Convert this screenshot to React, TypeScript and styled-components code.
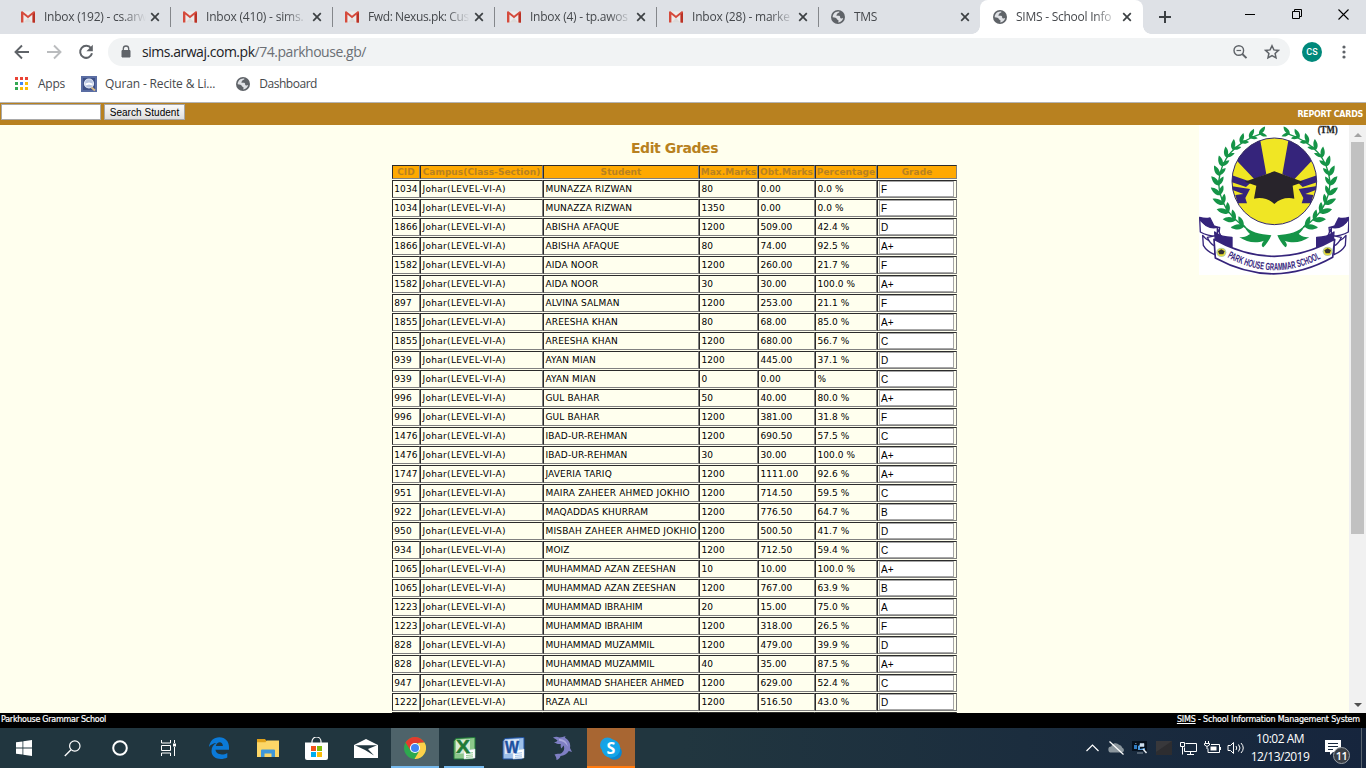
import React from "react";
import styled, { createGlobalStyle } from "styled-components";

const VERDANA = `Verdana, "DejaVu Sans", sans-serif`;
const SEGOE = `"Segoe UI", "Open Sans", "Noto Sans", sans-serif`;
const BLUE = "#35247b";

const Global = createGlobalStyle`
  *{box-sizing:border-box}
  html,body{margin:0;padding:0;overflow:hidden;background:#ffffee}
`;
const Screen = styled.div`
  width:1366px;height:768px;display:flex;flex-direction:column;overflow:hidden;
  font-family:${SEGOE};
`;

/* ---------- browser chrome ---------- */
const TabStrip = styled.div`
  height:34px;background:#dee1e6;display:flex;padding-left:9px;flex:none;
`;
const Tab = styled.div<{ $active?: boolean; $sep?: boolean }>`
  width:162px;height:34px;display:flex;align-items:center;padding-left:12px;position:relative;
  ${p => p.$active && `background:#fff;border-radius:8px 8px 0 0;margin-left:-1px;width:163px;padding-left:13px;
    &::before,&::after{content:"";position:absolute;bottom:0;width:8px;height:8px}
    &::before{left:-8px;background:radial-gradient(circle at 0 0,transparent 7.5px,#fff 8px)}
    &::after{right:-8px;background:radial-gradient(circle at 100% 0,transparent 7.5px,#fff 8px)}`}
  ${p => p.$sep && `&::after{content:"";position:absolute;right:0;top:7px;width:1px;height:20px;background:#84878b}`}
`;
const TabText = styled.span<{ $ls: number }>`
  margin-left:9px;width:106px;height:18px;line-height:18px;font-size:12px;color:#45484c;white-space:nowrap;
  letter-spacing:${p => p.$ls}px;flex:none;
  mask-image:linear-gradient(90deg,#000 78px,transparent 102px);
`;
const NewTab = styled.div`width:20px;margin-left:12px;display:flex;align-items:center;`;
const WindowButtons = styled.div`margin-left:auto;display:flex;gap:36px;padding:9px 17px 0 0;height:24px;`;
const Toolbar = styled.div`
  height:36px;background:#fff;display:flex;align-items:center;flex:none;padding-left:14px;
`;
const NavIcons = styled.div`display:flex;gap:16px;width:94px;`;
const Omnibox = styled.div`
  width:1182px;height:28px;border-radius:14px;background:#f1f3f4;display:flex;align-items:center;padding:0 10px 0 13px;
  font-size:14px;color:#6b6f74;
`;
const Url = styled.span`margin-left:11px;flex:1;line-height:20px;letter-spacing:-0.47px;& b{font-weight:400;color:#202124}`;
const OmniIcons = styled.div`display:flex;gap:16px;`;
const Avatar = styled.div`
  width:20px;height:20px;border-radius:50%;background:#00897b;color:#fff;margin:0 14px 0 12px;
  font:500 9px/20px Roboto,sans-serif;text-align:center;
`;
const Bookmarks = styled.div`
  height:33px;background:#fff;display:flex;align-items:center;flex:none;padding:0 0 5px 15px;
  border-bottom:1px solid #b4b4b4;font-size:12px;color:#45484c;
`;
const Bookmark = styled.div<{ $gap: number; $after: number; $ls: number }>`
  display:flex;align-items:center;gap:${p => p.$gap}px;margin-right:${p => p.$after}px;letter-spacing:${p => p.$ls}px;white-space:nowrap;
`;

/* ---------- page ---------- */
const GoldBar = styled.div`
  height:22px;background:#b88120;display:flex;align-items:flex-start;flex:none;padding:1px 3px 0 1px;
`;
const SearchInput = styled.input`
  width:100px;height:16px;border:1px solid #a9a9a9;background:#fff;padding:0;margin:0 3px 0 0;
`;
const SearchButton = styled.button`
  width:81px;height:16px;border:1px solid #a6a6a6;background:linear-gradient(#fafafa,#dedede);padding:0;margin:0;
  font:10px/13px "Liberation Sans",sans-serif;color:#000;letter-spacing:0.05px;white-space:nowrap;
`;
const BarLink = styled.span`
  margin-left:auto;margin-top:5px;font:bold 8px/12px ${VERDANA};color:#fff;letter-spacing:-0.28px;
`;
const Page = styled.div`height:588px;display:flex;background:#ffffee;flex:none;overflow:hidden;`;
const Side = styled.div`width:392px;`;
const Main = styled.div`width:565px;`;
const Title = styled.h1`
  margin:0;height:40px;padding-top:13px;font:bold 14px/20px ${VERDANA};color:#b88120;text-align:center;letter-spacing:-0.4px;
`;
const Grades = styled.table`
  width:565px;table-layout:fixed;border-collapse:separate;border-spacing:0 1px;margin-top:-1px;
`;
const Th = styled.th`
  height:14px;padding:1px 0 0;background:#ffa900;color:#b88120;font:bold 9px/11px ${VERDANA};letter-spacing:0.05px;white-space:nowrap;
  border:1px solid;border-color:#2b2b2b #808080 #808080 #2b2b2b;text-align:center;
`;
const Td = styled.td<{ $input?: boolean; $ls?: number; $pad?: number }>`
  height:18px;padding:${p => (p.$input ? "0 0 0 1px" : `0 0 1px ${p.$pad ?? 1.5}px`)};vertical-align:middle;
  font:9px/14px ${VERDANA};letter-spacing:${p => p.$ls ?? 0.07}px;color:#000;white-space:nowrap;
  border:1px solid;border-color:#2b2b2b #808080 #808080 #2b2b2b;
`;
const GradeInput = styled.input`
  display:block;width:75px;height:16px;border:1px solid #a6a6a6;background:#fff;padding:1px 0 1px 1px;margin:0;
  font:10px/12px "Liberation Sans",sans-serif;color:#000;
`;
const LogoArea = styled.div`width:392px;display:flex;justify-content:flex-end;`;
const ScrollBar = styled.div`
  width:17px;background:#f1f1f1;display:flex;flex-direction:column;align-items:center;padding:7px 0 6px;
`;
const Thumb = styled.div`width:13px;height:392px;background:#c1c1c1;margin-top:5px;`;
const ArrowUp = styled.div`border:4px solid transparent;border-bottom-color:#a3a3a3;border-top:0;height:5px;`;
const ArrowDown = styled.div`border:4px solid transparent;border-top-color:#505050;border-bottom:0;height:4px;margin-top:auto;`;
const Footer = styled.div`
  height:15px;background:#000;color:#fff;display:flex;justify-content:space-between;flex:none;padding:1px 6px 0 1px;
  font:8px/12px ${VERDANA};-webkit-text-stroke:0.2px #fff;
`;
const FootText = styled.span<{ $ls: number }>`letter-spacing:${p => p.$ls}px;`;

/* ---------- taskbar ---------- */
const Taskbar = styled.div`
  height:40px;display:flex;flex:none;background:linear-gradient(90deg,#21363f 0%,#21363f 50%,#1b2d3e 75%,#16253d 100%);
`;
const TaskCell = styled.div<{ $w?: number; $bg?: string; $line?: string; $inset?: number }>`
  width:${p => p.$w ?? 49}px;height:40px;display:flex;align-items:center;justify-content:center;position:relative;
  background:${p => p.$bg ?? "transparent"};
  ${p => p.$line && `&::after{content:"";position:absolute;left:${p.$inset ?? 0}px;right:${p.$inset ?? 0}px;bottom:0;height:2px;background:${p.$line}}`}
`;
const Tray = styled.div`margin-left:auto;display:flex;align-items:center;`;
const TrayItem = styled.div`width:24px;display:flex;justify-content:center;`;
const Clock = styled.div`
  width:64px;font-size:12px;line-height:18px;color:#fff;text-align:center;letter-spacing:-0.5px;white-space:nowrap;
`;
const Notice = styled.div`width:36px;height:30px;margin-left:13px;padding-top:7px;position:relative;`;
const Badge = styled.div`
  position:absolute;left:8px;top:14px;width:17px;height:17px;border-radius:50%;background:#3a3f46;border:1px solid #9aa0a6;
  font:600 11px/15px ${SEGOE};color:#fff;text-align:center;letter-spacing:-0.5px;
`;
const ShowDesktop = styled.div`width:5px;height:40px;border-left:1px solid #59646f;`;

const Gmail = () => (
  <svg width="14" height="12" viewBox="0 0 14 12">
    <path d="M1 .5h12v11H1z" fill="#ececec" />
    <path d="M2.500 11.500 7 7l4.500 4.500z" fill="#dcdcdc" />
    <path d="M0 1.200v10.300h2.400V3.500L7 7.300l4.600-3.800v8H14V1.200C14 .3 13 0 12.300.5L7 4.700 1.700.5C1 0 0 .3 0 1.200z" fill="#d54b3d" />
    <path d="M11.600 3.500 14 1.500v10h-2.400z" fill="#b93226" />
  </svg>
);
const Globe = () => (
  <svg width="14" height="14" viewBox="0 0 14 14">
    <circle cx="7" cy="7" r="7" fill="#5f6368" />
    <path d="M8.300 1.600c.3 1.200-.6 1.300-1.500 1.500-.5.200-.3 1.100-.9 1.300-.6.100-1 .7-.4 1.100.9.500 2.700-.1 3.400.8.500.7-.1 1.400.7 1.900.8.400 1.300.2 2.500-.3-.4 2.300-2.200 4.400-4.900 4.500.1-1 .6-1.300.3-2C7.100 9.500 5.900 9.900 5.700 8.800 5.500 7.900 4 7.300 1.700 7.200 1.500 4.200 4.500.9 8.300 1.600z" fill="#dfe1e5" />
  </svg>
);
const Cross = () => (
  <svg width="10" height="10" viewBox="0 0 10 10"><path d="M1.200 1.200l7.600 7.600M8.800 1.200L1.200 8.800" stroke="#3c4043" strokeWidth="1.700" /></svg>
);

const Leaf = ({ x, y, a, s }: { x: number; y: number; a: number; s: number }) => (
  <path d="M-3 0C4-10 17-9 29-2 20 6 8 7-3 0z" transform={`translate(${x} ${y}) rotate(${a}) scale(${s})`} />
);
const Branch = () => {
  const leaves: React.ReactNode[] = [];
  for (let i = 0; i < 13; i++) {
    const t = ((124 + i * 10.900) * Math.PI) / 180;
    const x = 265 + 167 * Math.cos(t);
    const y = 190 + 154 * Math.sin(t);
    const dir = (Math.atan2(154 * Math.cos(t), -167 * Math.sin(t)) * 180) / Math.PI;
    const s = 1.300 - i * 0.030;
    leaves.push(<Leaf key={`a${i}`} x={x} y={y} a={dir - 36} s={s} />, <Leaf key={`b${i}`} x={x} y={y} a={dir + 36} s={s * 0.850} />);
  }
  return (
    <g fill="#159447">
      {leaves}
      <path d="M178 322Q100 270 98 185 108 80 228 40" fill="none" stroke="#159447" strokeWidth="4" />
      <path d="M172 312C190 338 222 342 256 346 250 360 242 372 232 382 224 378 228 368 234 362 208 372 182 366 160 352 178 352 186 346 192 342 184 334 176 326 172 312z" />
    </g>
  );
};
const Crest = () => (
  <g>
    <ellipse rx="15" ry="14" fill="#b9cfa2" />
    <circle r="11" fill="#efe028" />
    <path d="M-10-3L0-9 10-3 6 6-6 6z" fill="#333" />
  </g>
);
const RibbonEnd = () => (
  <g stroke={BLUE} strokeWidth="4" strokeLinejoin="round">
    <path d="M50 346Q64 364 86 366V404Q62 394 52 376z" fill="#fff" />
    <path d="M41 294Q52 322 101 322L98 350Q62 348 43 336z" fill="#fff" />
    <path d="M41 292Q58 298 72 294L84 318 96 322Q58 330 41 292z" fill={BLUE} />
    <path d="M94 324V346L64 352Q72 372 86 378V362L106 352Z" fill="#fff" />
    <path d="M86 336Q106 352 138 352V382Q108 378 88 362z" fill={BLUE} />
  </g>
);
const SchoolLogo = () => (
  <svg width="150" height="150" viewBox="39 15 450 450">
    <defs>
      <clipPath id="disc"><ellipse cx="265" cy="184" rx="127" ry="130" /></clipPath>
      <path id="motto" d="M122 411Q265 491 412 411" />
    </defs>
    <path d="M39 15h450v450H39z" fill="#fff" />
    <g clipPath="url(#disc)">
      <path d="M130 50h270v270H130z" fill="#f0e624" />
      <g fill={BLUE}>
        <path d="M220 45L241 163 205 178 154 124 170 70zM310 45L289 163 325 178 376 124 360 70z" />
        <path d="M135 165L196 186 180 201 135 186zM395 165L334 186 350 201 395 186z" />
        <path d="M135 198L192 207 178 234 183 250 155 250 148 225 172 222 135 208zM395 198L338 207 352 234 347 250 375 250 382 225 358 222 395 208z" />
      </g>
      <path d="M196 200q8-9 17-2l1 36-18-12zM334 200q-8-9-17-2l-1 36 18-12z" fill="#f0e624" />
    </g>
    <ellipse cx="265" cy="184" rx="127" ry="130" fill="none" stroke="#332a6b" strokeWidth="3" />
    <path d="M176 185L265 154 352 186 320 197 325 236Q290 229 265 252 240 229 204 236L211 197z" fill="#28242b" />
    <Branch />
    <g transform="translate(530 0) scale(-1 1)"><Branch /></g>
    <RibbonEnd />
    <g transform="translate(530 0) scale(-1 1)"><RibbonEnd /></g>
    <path d="M84 358Q265 460 446 358L440 412Q265 510 88 414z" fill="#fff" stroke={BLUE} strokeWidth="5" strokeLinejoin="round" />
    <g transform="translate(106 397)"><Crest /></g>
    <g transform="translate(425 394)"><Crest /></g>
    <text fontFamily="Liberation Sans Narrow, Liberation Sans" fontWeight="bold" fontSize="31" fill={BLUE}>
      <textPath href="#motto" startOffset="2" textLength="294" lengthAdjust="spacingAndGlyphs">PARK HOUSE GRAMMAR SCHOOL</textPath>
    </text>
    <text x="395" y="38" fontFamily="Liberation Serif" fontWeight="bold" fontSize="30" fill="#222" stroke="#222" strokeWidth=".8" textLength="60" lengthAdjust="spacingAndGlyphs">(TM)</text>
  </svg>
);

const J = "Johar(LEVEL-VI-A)";
const rows: string[][] = [
  ["1034", "MUNAZZA RIZWAN", "80", "0.00", "0.0 %", "F"],
  ["1034", "MUNAZZA RIZWAN", "1350", "0.00", "0.0 %", "F"],
  ["1866", "ABISHA AFAQUE", "1200", "509.00", "42.4 %", "D"],
  ["1866", "ABISHA AFAQUE", "80", "74.00", "92.5 %", "A+"],
  ["1582", "AIDA NOOR", "1200", "260.00", "21.7 %", "F"],
  ["1582", "AIDA NOOR", "30", "30.00", "100.0 %", "A+"],
  ["897", "ALVINA SALMAN", "1200", "253.00", "21.1 %", "F"],
  ["1855", "AREESHA KHAN", "80", "68.00", "85.0 %", "A+"],
  ["1855", "AREESHA KHAN", "1200", "680.00", "56.7 %", "C"],
  ["939", "AYAN MIAN", "1200", "445.00", "37.1 %", "D"],
  ["939", "AYAN MIAN", "0", "0.00", "%", "C"],
  ["996", "GUL BAHAR", "50", "40.00", "80.0 %", "A+"],
  ["996", "GUL BAHAR", "1200", "381.00", "31.8 %", "F"],
  ["1476", "IBAD-UR-REHMAN", "1200", "690.50", "57.5 %", "C"],
  ["1476", "IBAD-UR-REHMAN", "30", "30.00", "100.0 %", "A+"],
  ["1747", "JAVERIA TARIQ", "1200", "1111.00", "92.6 %", "A+"],
  ["951", "MAIRA ZAHEER AHMED JOKHIO", "1200", "714.50", "59.5 %", "C"],
  ["922", "MAQADDAS KHURRAM", "1200", "776.50", "64.7 %", "B"],
  ["950", "MISBAH ZAHEER AHMED JOKHIO", "1200", "500.50", "41.7 %", "D"],
  ["934", "MOIZ", "1200", "712.50", "59.4 %", "C"],
  ["1065", "MUHAMMAD AZAN ZEESHAN", "10", "10.00", "100.0 %", "A+"],
  ["1065", "MUHAMMAD AZAN ZEESHAN", "1200", "767.00", "63.9 %", "B"],
  ["1223", "MUHAMMAD IBRAHIM", "20", "15.00", "75.0 %", "A"],
  ["1223", "MUHAMMAD IBRAHIM", "1200", "318.00", "26.5 %", "F"],
  ["828", "MUHAMMAD MUZAMMIL", "1200", "479.00", "39.9 %", "D"],
  ["828", "MUHAMMAD MUZAMMIL", "40", "35.00", "87.5 %", "A+"],
  ["947", "MUHAMMAD SHAHEER AHMED", "1200", "629.00", "52.4 %", "C"],
  ["1222", "RAZA ALI", "1200", "516.50", "43.0 %", "D"],
];
const columns: [string, number][] = [
  ["CID", 28], ["Campus(Class-Section)", 123], ["Student", 156], ["Max.Marks", 59],
  ["Obt.Marks", 57], ["Percentage", 62], ["Grade", 80],
];
const tabs: [string, boolean, number][] = [
  ["Inbox (192) - cs.arw", true, -0.250], ["Inbox (410) - sims.", true, -0.200], ["Fwd: Nexus.pk: Cus", true, -0.400],
  ["Inbox (4) - tp.awos", true, -0.250], ["Inbox (28) - marke", true, -0.200], ["TMS", false, -0.300],
];

const apps = ["#ea4335", "#ea4335", "#ea4335", "#34a853", "#4285f4", "#fbbc05", "#34a853", "#fbbc05", "#fbbc05"];

const OfficeIcon = ({ letter, color, light }: { letter: string; color: string; light: string }) => (
  <svg width="23" height="23" viewBox="0 0 23 23">
    <path d="M3 1.500L22 .5V18L20 22H1V4z" fill={light} stroke={color} strokeWidth="1" />
    <path d="M3 3L17 2v14L3 17z" fill="#fff" opacity=".65" />
    <path d="M11 14l11-2v9l-11 1z" fill="#fff" stroke="#c8d4dc" strokeWidth=".5" />
    <path d="M13 16.500l7-.8M13 18.500l7-.6M13 20.300l7-.5" stroke={light} />
    <text x="3" y="16" fontFamily="Liberation Sans" fontWeight="bold" fontSize={letter === "W" ? 16 : 18} fill={color} stroke={color} strokeWidth=".5" textLength="14" lengthAdjust="spacingAndGlyphs">{letter}</text>
  </svg>
);

export default function App() {
  return (
    <Screen>
      <Global />
      <TabStrip>
        {tabs.map(([label, mail, ls], i) => (
          <Tab key={label} $sep={i < 5}>
            {mail ? <Gmail /> : <Globe />}
            <TabText $ls={ls}>{label}</TabText>
            <Cross />
          </Tab>
        ))}
        <Tab $active><Globe /><TabText $ls={-0.25}>SIMS - School Info</TabText><Cross /></Tab>
        <NewTab><svg width="20" height="20" viewBox="0 0 20 20"><path d="M10 4v12M4 10h12" stroke="#3c4043" strokeWidth="2" /></svg></NewTab>
        <WindowButtons>
          <svg width="10" height="11"><path d="M0 5.500h10" stroke="#000" /></svg>
          <svg width="11" height="11"><path d="M1.500 2.500h7v7h-7zM3.500 2.500v-2h7v7h-2" fill="none" stroke="#000" /></svg>
          <svg width="11" height="11"><path d="M.5.5l10 10M10.500.5l-10 10" stroke="#000" strokeWidth="1.100" /></svg>
        </WindowButtons>
      </TabStrip>
      <Toolbar>
        <NavIcons>
          <svg width="16" height="16"><path d="M15 8H2M8 1.500L1.500 8 8 14.500" fill="none" stroke="#5f6368" strokeWidth="1.900" /></svg>
          <svg width="16" height="16"><path d="M1 8h13M8 1.500L14.500 8 8 14.500" fill="none" stroke="#babcbe" strokeWidth="1.900" /></svg>
          <svg width="16" height="16"><path d="M13.100 4.400A6 6 0 1 0 14 9.300" fill="none" stroke="#5f6368" strokeWidth="2" /><path d="M14.800.8v6.400H8.400z" fill="#5f6368" /></svg>
        </NavIcons>
        <Omnibox>
          <svg width="10" height="14" viewBox="0 0 10 14"><path d="M1 5.500h8v6.500H1z" fill="#5f6368" stroke="#5f6368" strokeLinejoin="round" /><path d="M2.300 6V3.700a2.700 2.700 0 0 1 5.400 0V6" fill="none" stroke="#5f6368" strokeWidth="1.300" /></svg>
          <Url><b>sims.arwaj.com.pk</b>/74.parkhouse.gb/</Url>
          <OmniIcons>
            <svg width="16" height="16"><circle cx="6.800" cy="6.500" r="4.800" fill="none" stroke="#5f6368" strokeWidth="1.400" /><path d="M10.300 10l4.200 4.200" stroke="#5f6368" strokeWidth="1.900" /><path d="M4.500 6.500h4.600" stroke="#5f6368" strokeWidth="1.200" /></svg>
            <svg width="16" height="16"><path d="M8 1.800l1.900 4.100 4.500.5-3.300 3.100.9 4.400L8 11.700 4 13.900l.9-4.400L1.600 6.400l4.500-.5z" fill="none" stroke="#5f6368" strokeWidth="1.500" /></svg>
          </OmniIcons>
        </Omnibox>
        <Avatar>CS</Avatar>
        <svg width="16" height="16"><g fill="#5f6368"><circle cx="8" cy="3" r="1.600" /><circle cx="8" cy="8" r="1.600" /><circle cx="8" cy="13" r="1.600" /></g></svg>
      </Toolbar>
      <Bookmarks>
        <Bookmark $gap={10} $after={16} $ls={-0.25}>
          <svg width="13" height="13">{apps.map((c, i) => <path key={i} d={`M${(i % 3) * 5} ${Math.floor(i / 3) * 5}h3v3h-3z`} fill={c} />)}</svg>
          Apps
        </Bookmark>
        <Bookmark $gap={8} $after={21} $ls={-0.14}>
          <svg width="16" height="16"><path d="M0 0h16v16H0z" fill="#5a6da3" /><path d="M2 2h12v12H2z" fill="#3c4f86" /><circle cx="8" cy="7.500" r="4.500" fill="#b8c4e0" stroke="#e4eaf6" strokeWidth="1.200" /><path d="M4.500 7.500L8 6.500l3.500 1v2L8 8.500l-3.500 1z" fill="#fff" /><path d="M10.500 11.500l3.500 3" stroke="#d9b982" strokeWidth="2" /></svg>
          Quran - Recite &amp; Li...
        </Bookmark>
        <Bookmark $gap={9} $after={0} $ls={-0.48}><Globe />Dashboard</Bookmark>
      </Bookmarks>

      <GoldBar>
        <SearchInput aria-label="Search" />
        <SearchButton>Search Student</SearchButton>
        <BarLink>REPORT CARDS</BarLink>
      </GoldBar>
      <Page>
        <Side />
        <Main>
          <Title>Edit Grades</Title>
          <Grades>
            <colgroup>{columns.map(([n, w]) => <col key={n} width={w} />)}</colgroup>
            <thead><tr>{columns.map(([n]) => <Th key={n}>{n}</Th>)}</tr></thead>
            <tbody>
              {rows.map((r, i) => (
                <tr key={i}>
                  <Td $pad={1.3}>{r[0]}</Td>
                  <Td $ls={0.3}>{J}</Td>
                  <Td $ls={r[1].startsWith("MUH") ? 0.02 : r[1].length > 20 ? 0.2 : 0.12}>{r[1]}</Td>
                  <Td>{r[2]}</Td><Td>{r[3]}</Td><Td>{r[4]}</Td>
                  <Td $input><GradeInput defaultValue={r[5]} aria-label="Grade" /></Td>
                </tr>
              ))}
              <tr>{columns.map(([n]) => <Td key={n} />)}</tr>
            </tbody>
          </Grades>
        </Main>
        <LogoArea><SchoolLogo /></LogoArea>
        <ScrollBar><ArrowUp /><Thumb /><ArrowDown /></ScrollBar>
      </Page>
      <Footer>
        <FootText $ls={-0.26}>Parkhouse Grammar School</FootText>
        <FootText $ls={-0.17}><u>SIMS</u> - School Information Management System</FootText>
      </Footer>

      <Taskbar>
        <TaskCell $w={48}><svg width="16" height="16"><path d="M0 2.300L6.500 1.400v6.200H0zM7.300 1.300L16 0v7.600H7.300zM0 8.400h6.500v6.200L0 13.700zM7.300 8.400H16V16l-8.700-1.300z" fill="#fff" /></svg></TaskCell>
        <TaskCell $w={48}><svg width="17" height="17"><circle cx="10.800" cy="6" r="5.200" fill="none" stroke="#fff" strokeWidth="1.200" /><path d="M7 9.800L.8 16" stroke="#fff" strokeWidth="1.300" /></svg></TaskCell>
        <TaskCell $w={48}><svg width="16" height="16"><circle cx="8" cy="8" r="6.800" fill="none" stroke="#fff" strokeWidth="2" /></svg></TaskCell>
        <TaskCell $w={50}><svg width="18" height="16"><path d="M1.500 0v3h9V0M1.500 16v-3h9v3M1.500 5.500h9v5h-9zM14.500 0v3M14.500 7v9" fill="none" stroke="#fff" /><path d="M13 3.500h3v3h-3z" fill="#fff" /></svg></TaskCell>
        <TaskCell><svg width="20" height="22" viewBox="0 0 20 22"><path d="M0 10C.8 4 4.800.3 10.300.3 16.500.3 20 4.800 20 10v2.800H6.500c.3 5 7.500 5.800 11.800 3.100v4.600C12 23.600 2.500 22 2.500 14c0-4 2-6.500 5-8C4.500 6.200 1.700 7.500 0 10zM6.800 9h7.100c0-5.200-6.200-5-7.100 0z" fill="#0b7ad8" /></svg></TaskCell>
        <TaskCell><svg width="22" height="18" viewBox="0 0 22 18"><path d="M0 0h8l1.500 2H22v16H0z" fill="#e0a11a" /><path d="M0 3.200h8.500l1.200-1.700H22V18H0z" fill="#fcd667" /><path d="M4 18v-6.500Q4 10.500 5 10.500h12q1 0 1 1V18h-3.500v-3.500h-7V18z" fill="#3f97d9" /></svg></TaskCell>
        <TaskCell><svg width="23" height="23" viewBox="0 0 23 23"><path d="M7 7V4.500a4.500 4.500 0 0 1 9 0V7" fill="none" stroke="#fff" strokeWidth="1.200" /><path d="M0 5.500h23V21q0 2-2 2H2q-2 0-2-2z" fill="#fff" /><path d="M6 9h5v5H6z" fill="#f1511b" /><path d="M12 9h5v5h-5z" fill="#80bb0b" /><path d="M6 15h5v5H6z" fill="#00adef" /><path d="M12 15h5v5h-5z" fill="#fbbc09" /></svg></TaskCell>
        <TaskCell $w={50}><svg width="24" height="19" viewBox="0 0 24 19"><path d="M0 6L12 0l12 6v13H0z" fill="#fff" /><path d="M1 6.300h22L14 10l6 6.500-9-5.500z" fill="#21363f" /></svg></TaskCell>
        <TaskCell $w={48} $bg="#4e636a" $line="#76b9ed">
          <svg width="22" height="22" viewBox="0 0 22 22"><circle cx="11" cy="11" r="11" fill="#2da94f" /><path d="M1.500 5.500A11 11 0 0 1 20.500 5.500L11 6.200 6.600 13.500z" fill="#e33b2e" /><path d="M20.500 5.500A11 11 0 0 1 10.500 22l5-8.500L14 6z" fill="#fdd04a" /><circle cx="11" cy="11" r="5.100" fill="#fff" /><circle cx="11" cy="11" r="4" fill="#4285f4" /></svg>
        </TaskCell>
        <TaskCell $w={50} $line="#76b9ed" $inset={5}><OfficeIcon letter="X" color="#1f7a38" light="#8cc88a" /></TaskCell>
        <TaskCell $w={48}><OfficeIcon letter="W" color="#1c4f9f" light="#9dc0ea" /></TaskCell>
        <TaskCell $w={50}><svg width="20" height="24" viewBox="0 0 20 24"><path d="M1 1.500C3 .8 5 .5 7.500 1.500 10 1.300 11.500.5 13.500.2L13 1.800C17 4 19 8 18 12l2 4-3.200-1C15 18 12 19.500 8.500 20 8 22 6.500 23.500 4.500 24 4.500 22 4 20.500 2.500 18.500 5 17.500 7 18 9 17.500 12 15.500 13 12.500 11.500 9.500L9.500 12.500C8.500 11 8.500 9.500 8.800 8 6 8.300 3.500 7.500 2 6 3.800 6 4.800 5.500 5.500 4.500 3.500 3 2.500 2.500 1 1.500z" fill="#7f7fc4" /><path d="M7 2.800q8 .5 9 8-3.500-6-9-6z" fill="#a9a8dc" /></svg></TaskCell>
        <TaskCell $w={48} $bg="#a86632" $line="#ff7a0f">
          <svg width="22" height="23" viewBox="0 0 22 23"><circle cx="7.500" cy="8" r="7.500" fill="#1c9fe0" /><circle cx="14.500" cy="15.500" r="7.300" fill="#0a86d0" /><circle cx="11" cy="11.500" r="9.300" fill="#12a5e8" /><text x="11" y="17" textAnchor="middle" fontFamily="Open Sans" fontWeight="bold" fontSize="16" fill="#fff">S</text></svg>
        </TaskCell>
        <Tray>
          <TrayItem><svg width="14" height="16"><path d="M1.500 11L7.500 5l6 6" fill="none" stroke="#fff" strokeWidth="1.200" /></svg></TrayItem>
          <TrayItem><svg width="17" height="16"><path d="M3.500 12.500a3 3 0 0 1-.3-6A4.500 4.500 0 0 1 11 4.800a4 4 0 0 1 3.300 2.900 2.500 2.500 0 0 1-.3 4.800z" fill="#8b969d" /><path d="M1.500 1.500l14 13" stroke="#fff" strokeWidth="1.200" /></svg></TrayItem>
          <TrayItem><svg width="16" height="16"><path d="M0 1h15v10H0z" fill="#07111d" /><path d="M2 5h3v4H2z" fill="#2f7cc4" /><path d="M6 6l2-1v4l5-1v2H6z" fill="#4c9be0" /><path d="M8 3.500h4v3H8zM3 3.500h1.500" fill="#cfe0f0" stroke="#cfe0f0" strokeWidth=".5" /><path d="M5 13h6" stroke="#8894a0" /><path d="M11 9l3.500 4" stroke="#e6ebf0" strokeWidth="1.500" /></svg></TrayItem>
          <TrayItem><svg width="16" height="16"><path d="M0 1h16v14H0z" fill="#2d2d30" /><path d="M0 1h16L0 12z" fill="#38383b" /></svg></TrayItem>
          <TrayItem><svg width="17" height="16"><path d="M5.500 3.500h11v8H4.500v-4M10.500 11.500v3M7 14.500h7M.5 2.500h4v4h-4zM2.500 6.500v8" fill="none" stroke="#fff" /></svg></TrayItem>
          <TrayItem><svg width="17" height="16"><path d="M7 4.500h8.500v8H4v-4M16.500 7v3M1.500 1v2.500M4.500 1v2.500M.5 3.500h5v1.500q-2.500 3-5 0zM3 6.500V9" fill="none" stroke="#fff" /><path d="M6.500 6.500h6v4h-6z" fill="#fff" /></svg></TrayItem>
          <TrayItem><svg width="18" height="16"><path d="M1 5.500h2.500L6.500 2.500v11L3.500 10.500H1zM9 6q1.500 2 0 4M11.500 4.500q3 3.500 0 7M14 3q4.500 5 0 10" fill="none" stroke="#fff" /></svg></TrayItem>
          <Clock>10:02 AM<br />12/13/2019</Clock>
          <Notice>
            <svg width="17" height="17"><path d="M0 0h16v12H8l-3 3v-3H0z" fill="#fff" /><path d="M3 3.500h10M3 6.500h10M3 9.500h5" stroke="#17273c" /></svg>
            <Badge>11</Badge>
          </Notice>
          <ShowDesktop />
        </Tray>
      </Taskbar>
    </Screen>
  );
}
